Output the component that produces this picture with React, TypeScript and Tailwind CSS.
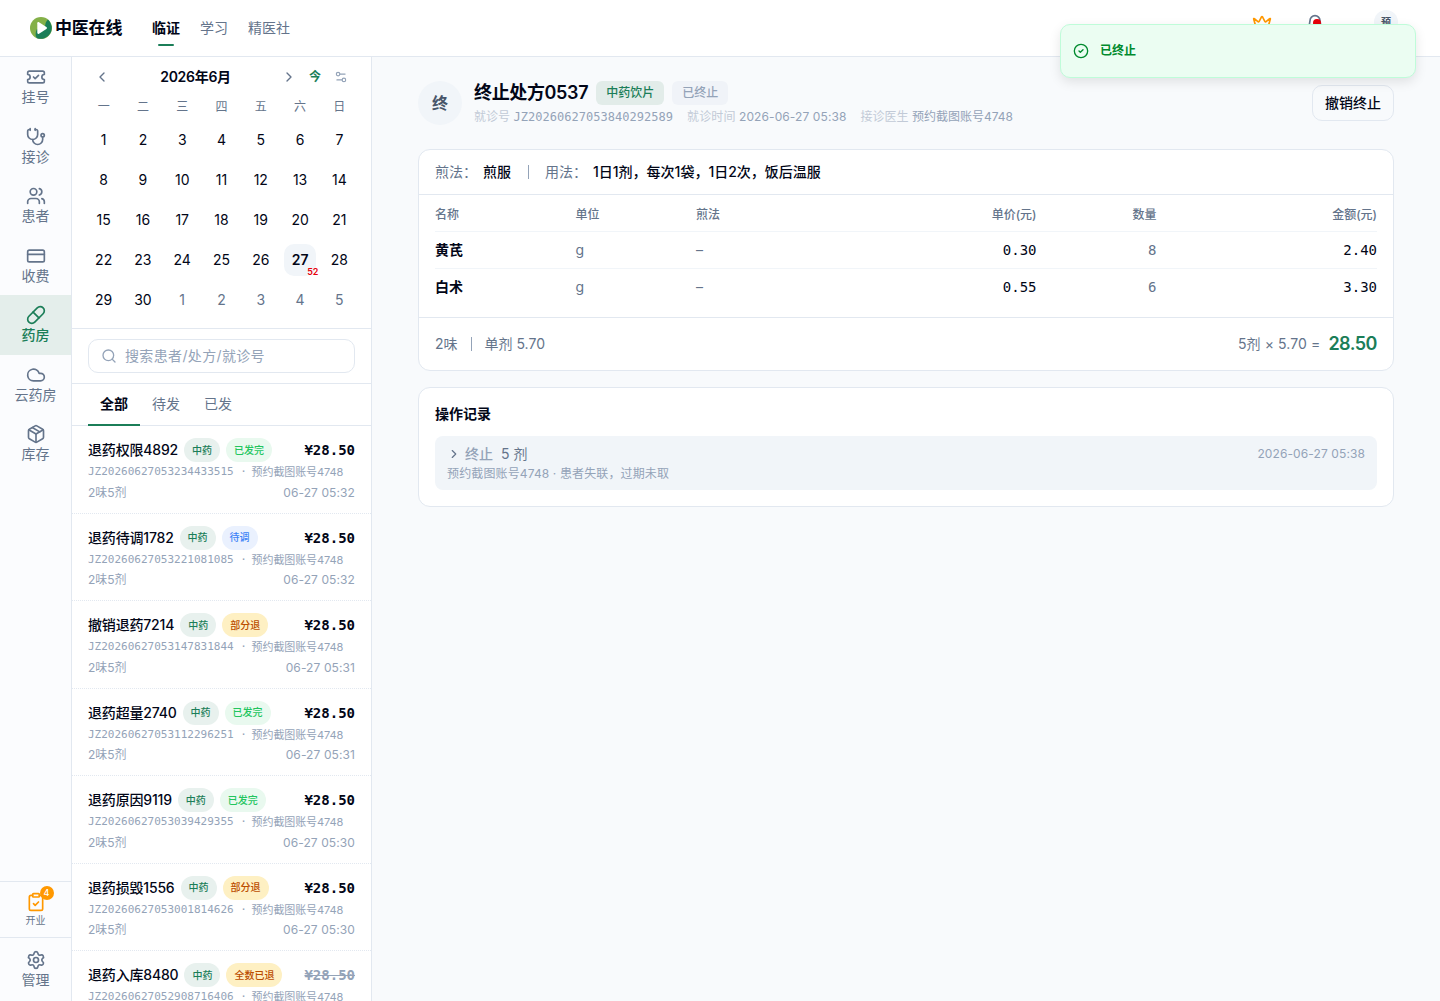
import React from 'react';
import {
  TicketCheck, Stethoscope, Users, CreditCard, Pill, Cloud, Package, ClipboardCheck, Settings,
  ChevronLeft, ChevronRight, Settings2, Search, Crown, Bell, CircleCheck,
} from 'lucide-react';

const MONO = "font-['DejaVu_Sans_Mono','Noto_Sans_CJK_SC',monospace]";

const nav = [
  { label: '挂号', Icon: TicketCheck },
  { label: '接诊', Icon: Stethoscope },
  { label: '患者', Icon: Users },
  { label: '收费', Icon: CreditCard },
  { label: '药房', Icon: Pill, active: true },
  { label: '云药房', Icon: Cloud },
  { label: '库存', Icon: Package },
];

const days = [...Array.from({ length: 30 }, (_, i) => i + 1), 1, 2, 3, 4, 5];

const done = 'bg-[#e9f9ef] text-[#22c55e]';
const wait = 'bg-[#eaf1fe] text-[#3b82f6]';
const part = 'bg-[#fef0c3] text-[#bb4d00]';

const orders = [
  { name: '退药权限4892', status: '已发完', tone: done, no: 'JZ20260627053234433515', time: '06-27 05:32' },
  { name: '退药待调1782', status: '待调', tone: wait, no: 'JZ20260627053221081085', time: '06-27 05:32' },
  { name: '撤销退药7214', status: '部分退', tone: part, no: 'JZ20260627053147831844', time: '06-27 05:31' },
  { name: '退药超量2740', status: '已发完', tone: done, no: 'JZ20260627053112296251', time: '06-27 05:31' },
  { name: '退药原因9119', status: '已发完', tone: done, no: 'JZ20260627053039429355', time: '06-27 05:30' },
  { name: '退药损毁1556', status: '部分退', tone: part, no: 'JZ20260627053001814626', time: '06-27 05:30' },
  { name: '退药入库8480', status: '全数已退', tone: part, no: 'JZ20260627052908716406', time: '', void: true },
];

const herbs = [
  { name: '黄芪', price: '0.30', qty: '8', sum: '2.40' },
  { name: '白术', price: '0.55', qty: '6', sum: '3.30' },
];

function Logo() {
  return (
    <svg width="22" height="22" viewBox="0 0 22 22">
      <circle cx="11" cy="11" r="11" fill="#84b048" />
      <path d="M18 2.6A11 11 0 0 1 7 21.2C5 19.5 5.4 15 7 12C9.5 14.5 15.5 11 15.5 6.5C16 5 17 3.5 18 2.6Z" fill="#1b7e58" />
      <path d="M7.3 6.2C7.3 5.3 8.2 4.8 9 5.3L16.4 10C17.1 10.5 17.1 11.5 16.4 12L9 16.7C8.2 17.2 7.3 16.7 7.3 15.8Z" fill="#fff" />
    </svg>
  );
}

function Header() {
  return (
    <header className="flex h-[57px] shrink-0 items-center border-b border-[#e2e8f0] bg-white pl-[30px] pr-[42px]">
      <div className="flex items-center gap-[3px]">
        <Logo />
        <span className="w-[67px] text-[17px] leading-6 font-semibold tracking-[-0.2px] whitespace-nowrap">中医在线</span>
      </div>
      <nav className="ml-[30px] flex gap-5 text-sm leading-5 text-[#64748b]">
        <span className="relative font-semibold text-[#020617]">
          临证
          <span className="absolute -bottom-2 left-1.5 h-0.5 w-4 rounded-full bg-[#1b7e58]" />
        </span>
        <span>学习</span>
        <span>精医社</span>
      </nav>
      <div className="ml-auto flex h-full items-start pt-3.5">
        <Crown size={20} className="mr-[33px] text-[#ff9800]" />
        <span className="relative mr-[49px]">
          <Bell size={20} className="text-[#64748b]" />
          <span className="absolute top-[5px] left-[7.5px] size-2 rounded-full bg-[#e7000b]" />
        </span>
        <span className="-mt-1 flex size-6 items-center justify-center rounded-full bg-[#f1f5f9] text-[10px] font-semibold text-[#475569]">预</span>
      </div>
    </header>
  );
}

function Sidebar() {
  return (
    <aside className="flex w-[72px] shrink-0 flex-col border-r border-[#e2e8f0] bg-[#fbfcfe] text-sm text-[#64748b]">
      {nav.map(({ label, Icon, active }) => (
        <div key={label} className={active ? 'flex h-[59.5px] flex-col items-center bg-[#e4eeeb] pt-2.5 font-medium text-[#1b7e58]' : 'flex h-[59.5px] flex-col items-center pt-2.5'}>
          <Icon size={20} />
          <span className="leading-5">{label}</span>
        </div>
      ))}
      <div className="mt-auto flex h-14 flex-col items-center border-t border-[#e2e8f0] pt-[10px]">
        <span className="relative">
          <ClipboardCheck size={20} className="text-[#ff9800]" />
          <span className="absolute -top-1.5 -right-2 flex size-3.5 items-center justify-center rounded-full bg-[#ff9800] text-[9px] font-medium text-white">4</span>
        </span>
        <span className="mt-px text-[10px] leading-[15px]">开业</span>
      </div>
      <div className="flex h-16 flex-col items-center border-t border-[#e2e8f0] pt-3">
        <Settings size={20} />
        <span className="leading-5">管理</span>
      </div>
    </aside>
  );
}

function Calendar() {
  return (
    <section className="h-[272px] shrink-0 border-b border-[#e2e8f0] px-3">
      <div className="flex h-10 items-center">
        <ChevronLeft size={16} className="ml-[10px] text-[#64748b]" />
        <span className="ml-[50px] w-[71px] text-center text-sm font-semibold tracking-[-0.3px] whitespace-nowrap">2026年6月</span>
        <ChevronRight size={16} className="ml-[50px] text-[#64748b]" />
        <span className="ml-3 text-xs font-semibold text-[#1b7e58]">今</span>
        <Settings2 size={14} className="ml-[13px] text-[#94a3b8]" />
      </div>
      <div className="grid h-5 grid-cols-7 text-center text-xs leading-5 text-[#64748b]">
        {['一', '二', '三', '四', '五', '六', '日'].map((d) => <span key={d}>{d}</span>)}
      </div>
      <div className="mt-[3px] grid grid-cols-7 text-sm">
        {days.map((d, i) => (
          <div key={i} className="flex h-10 items-center justify-center">
            {i === 26 ? (
              <span className="relative flex size-8 items-center justify-center rounded-[10px] bg-[#f1f5f9] font-semibold">
                27
                <span className="absolute -right-0.5 -bottom-0.5 text-[9px] leading-3 font-semibold tracking-[-0.2px] text-[#e7000b]">52</span>
              </span>
            ) : (
              <span className={i >= 30 ? 'text-[#64748b]' : ''}>{d}</span>
            )}
          </div>
        ))}
      </div>
    </section>
  );
}

function OrderPanel() {
  return (
    <aside className="flex w-[300px] shrink-0 flex-col overflow-hidden border-r border-[#e2e8f0] bg-white">
      <Calendar />
      <div className="h-[55px] shrink-0 border-b border-[#e2e8f0] px-4 pt-2.5">
        <div className="flex h-[34px] items-center gap-2 rounded-[10px] border border-[#e2e8f0] px-3 text-sm tracking-[0.35px] text-[#94a3b8]">
          <Search size={16} />
          搜索患者/处方/就诊号
        </div>
      </div>
      <div className="flex h-[42px] shrink-0 border-b border-[#e2e8f0] pl-4 text-sm leading-10 text-[#64748b]">
        <span className="-mb-px border-b-2 border-[#1b7e58] px-3 font-semibold text-[#020617]">全部</span>
        <span className="px-3">待发</span>
        <span className="px-3">已发</span>
      </div>
      {orders.map((o) => (
        <div key={o.no} className="h-[87.5px] shrink-0 border-b border-dotted border-[#e2e8f0] px-4 pt-3">
          <div className="flex h-6 items-center gap-1.5">
            <span className="text-sm font-medium tracking-[-0.18px]">{o.name}</span>
            <span className="flex h-6 items-center rounded-full bg-[#e8f1ee] px-2 text-[10px] font-medium text-[#1b7e58]">中药</span>
            <span className={`flex h-6 items-center rounded-full px-2 text-[10px] font-medium ${o.tone}`}>{o.status}</span>
            <span className={`ml-auto text-sm font-semibold ${MONO} ${o.void ? 'text-[#94a3b8] line-through' : ''}`}>¥28.50</span>
          </div>
          <div className="mt-px flex text-[11px] leading-[18px] whitespace-pre text-[#94a3b8]">
            <span className={MONO}>{o.no} · </span>
            <span className="-ml-0.5 tracking-[-0.1px]">预约截图账号4748</span>
          </div>
          <div className="mt-[2.5px] flex justify-between text-xs leading-[18px] text-[#94a3b8]">
            <span>2味5剂</span>
            <span className="tracking-[0.1px]">{o.time}</span>
          </div>
        </div>
      ))}
    </aside>
  );
}

function Prescription() {
  return (
    <section className="h-[222px] rounded-xl border border-[#e2e8f0] bg-white text-sm">
      <div className="flex h-[45px] items-center border-b border-[#e2e8f0] px-4 font-medium">
        <span className="font-normal text-[#64748b]">煎法：</span>
        <span className="ml-1.5">煎服</span>
        <span className="mr-4 ml-[17px] h-3.5 w-px bg-[#94a3b8]" />
        <span className="font-normal text-[#64748b]">用法：</span>
        <span className="ml-1.5">1日1剂，每次1袋，1日2次，饭后温服</span>
      </div>
      <div className="h-[123px] border-b border-[#e2e8f0] px-4">
        <div className="grid h-[37px] grid-cols-[140.5px_120.5px_220.5px_120px_120px_1fr] items-center border-b border-[#f1f5f9] pt-1 text-xs font-medium text-[#64748b]">
          <span>名称</span><span>单位</span><span>煎法</span>
          <span className="text-right">单价(元)</span><span className="text-right">数量</span><span className="text-right">金额(元)</span>
        </div>
        {herbs.map((h, i) => (
          <div key={h.name} className={`grid grid-cols-[140.5px_120.5px_220.5px_120px_120px_1fr] items-center text-[#64748b] ${i === 0 ? 'h-[37px] border-b border-[#f1f5f9]' : 'h-9'}`}>
            <span className="font-semibold text-[#020617]">{h.name}</span><span>g</span><span>–</span>
            <span className={`text-right text-[#020617] ${MONO}`}>{h.price}</span>
            <span className={`text-right ${MONO}`}>{h.qty}</span>
            <span className={`text-right text-[#020617] ${MONO}`}>{h.sum}</span>
          </div>
        ))}
      </div>
      <div className="flex h-[52px] items-center px-4 text-[#64748b]">
        <span>2味</span>
        <span className="mx-[13px] h-3.5 w-px bg-[#94a3b8]" />
        <span>单剂 5.70</span>
        <span className="ml-auto tracking-[0.1px]">5剂 × 5.70 =</span>
        <span className="ml-2 text-lg font-semibold tracking-[-0.5px] text-[#1b7e58]">28.50</span>
      </div>
    </section>
  );
}

function Detail() {
  return (
    <main className="flex-1 bg-[#f8fafc] pr-[46px] pl-[46px] pt-6">
      <div className="flex h-11 items-center">
        <span className="flex size-11 items-center justify-center rounded-full bg-[#f1f5f9] text-base font-semibold text-[#475569]">终</span>
        <div className="ml-3">
          <div className="flex h-6 items-center gap-2">
            <h1 className="text-lg font-semibold tracking-[-0.35px]">终止处方0537</h1>
            <span className="flex h-6 items-center rounded-md bg-[#e2ece9] px-2.5 text-xs font-medium text-[#1b7e58]">中药饮片</span>
            <span className="flex h-6 items-center rounded-md bg-[#f0f3f8] px-2.5 text-xs font-medium text-[#94a3b8]">已终止</span>
          </div>
          <div className="mt-[3px] -mb-px flex gap-3.5 text-xs leading-[18px] text-[#94a3b8]">
            <span className="tracking-[0.03px]"><span className="text-[#c2cad7]">就诊号</span> <span className={MONO}>JZ20260627053840292589</span></span>
            <span className="tracking-[0.1px]"><span className="text-[#c2cad7]">就诊时间</span> 2026-06-27 05:38</span>
            <span><span className="text-[#c2cad7]">接诊医生</span> 预约截图账号4748</span>
          </div>
        </div>
        <button className="ml-auto h-9 rounded-[10px] border border-[#e2e8f0] bg-[#f8fafc] px-3 text-sm font-medium">撤销终止</button>
      </div>
      <div className="mt-6 flex flex-col gap-4">
        <Prescription />
        <section className="h-[120px] rounded-xl border border-[#e2e8f0] bg-white px-4 pt-4">
          <h2 className="text-sm leading-5 font-semibold">操作记录</h2>
          <div className="mt-3 h-[54px] rounded-lg bg-[#f1f5f9] px-3 pt-2 text-xs text-[#94a3b8]">
            <div className="flex h-5 items-center">
              <ChevronRight size={14} className="text-[#64748b]" />
              <span className="ml-1 text-sm font-medium">终止</span>
              <span className="ml-2 text-sm text-[#64748b]">5 剂</span>
              <span className="ml-auto tracking-[0.1px]">2026-06-27 05:38</span>
            </div>
            <div className="mt-px leading-[18px] tracking-[0.13px]">预约截图账号4748 · 患者失联，过期未取</div>
          </div>
        </section>
      </div>
    </main>
  );
}

export default function App() {
  return (
    <div className="relative flex h-[1001px] flex-col overflow-hidden bg-white font-[Inter,'Noto_Sans_CJK_SC',sans-serif] text-[#020617]">
      <Header />
      <div className="flex min-h-0 flex-1">
        <Sidebar />
        <OrderPanel />
        <Detail />
      </div>
      <div className="absolute top-6 right-6 flex h-[54px] w-[356px] items-center gap-[11px] rounded-[10px] border border-[#bffcd9] bg-[#ebfdf2] px-3 font-semibold text-[#008a2e] shadow-[0_4px_12px_rgba(0,0,0,0.1)]">
        <CircleCheck size={16} />
        <span className="text-xs">已终止</span>
      </div>
    </div>
  );
}
